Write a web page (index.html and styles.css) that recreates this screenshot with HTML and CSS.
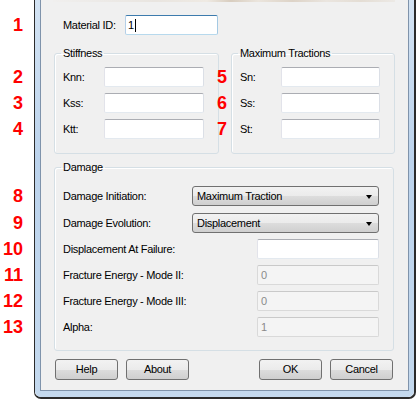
FILE: index.html
```html
<!DOCTYPE html>
<html>
<head>
<meta charset="utf-8">
<link rel="stylesheet" href="styles.css">
</head>
<body>
<div class="screen">
  <div class="window">
    <div class="frame">
      <div class="client">
        <div class="banner"></div>
        <div class="row id-row">
          <span class="num">1</span>
          <span class="lbl id-lbl">Material ID:</span>
          <div class="input focus id-input">1<span class="caret"></span></div>
        </div>
        <div class="groups">
          <fieldset class="group stiff">
            <legend>Stiffness</legend>
            <div class="row"><span class="num">2</span><span class="lbl small">Knn:</span><div class="input small-in"></div></div>
            <div class="row"><span class="num">3</span><span class="lbl small">Kss:</span><div class="input small-in"></div></div>
            <div class="row"><span class="num">4</span><span class="lbl small">Ktt:</span><div class="input small-in"></div></div>
          </fieldset>
          <fieldset class="group trac">
            <legend>Maximum Tractions</legend>
            <div class="row"><span class="num inner">5</span><span class="lbl small">Sn:</span><div class="input small-in"></div></div>
            <div class="row"><span class="num inner">6</span><span class="lbl small">Ss:</span><div class="input small-in"></div></div>
            <div class="row"><span class="num inner">7</span><span class="lbl small">St:</span><div class="input small-in"></div></div>
          </fieldset>
        </div>
        <fieldset class="group damage">
          <legend>Damage</legend>
          <div class="row drow first"><span class="num">8</span><span class="lbl">Damage Initiation:</span><div class="combo">Maximum Traction<span class="arrow"></span></div></div>
          <div class="row drow second"><span class="num">9</span><span class="lbl">Damage Evolution:</span><div class="combo">Displacement<span class="arrow"></span></div></div>
          <div class="row drow"><span class="num">10</span><span class="lbl">Displacement At Failure:</span><div class="input wide-in"></div></div>
          <div class="row drow"><span class="num">11</span><span class="lbl">Fracture Energy - Mode II:</span><div class="input wide-in disabled">0</div></div>
          <div class="row drow"><span class="num">12</span><span class="lbl">Fracture Energy - Mode III:</span><div class="input wide-in disabled">0</div></div>
          <div class="row drow"><span class="num">13</span><span class="lbl">Alpha:</span><div class="input wide-in disabled">1</div></div>
        </fieldset>
        <div class="buttons">
          <div class="btn-group">
            <button class="btn">Help</button>
            <button class="btn">About</button>
          </div>
          <div class="btn-group">
            <button class="btn">OK</button>
            <button class="btn">Cancel</button>
          </div>
        </div>
      </div>
    </div>
  </div>
</div>
</body>
</html>
```

FILE: styles.css
```css
html, body {
  margin: 0;
  padding: 0;
  background: #ffffff;
  width: 416px;
  height: 399px;
  overflow: hidden;
}

body {
  font-family: "Liberation Sans", Arial, sans-serif;
  font-size: 11px;
  letter-spacing: -0.3px;
  color: #000;
}

.screen {
  display: flex;
  padding-left: 34px;
}

.window {
  width: 382px;
  box-sizing: border-box;
  border-left: 1px solid #2b2b2b;
  border-right: 2px solid #2b2b2b;
  border-bottom: 2px solid #2b2b2b;
  border-radius: 0 0 7px 7px;
}

.frame {
  padding: 0 5px 6px 5px;
  background: linear-gradient(to bottom, #d3e3f3 0%, #bcd3ec 40%, #c4d9ee 100%);
  border-radius: 0 0 6px 6px;
}

.client {
  background: #f0f0f0;
  border: 1px solid #7f93ab;
  border-top: none;
  height: 390px;
  box-sizing: content-box;
  display: flex;
  flex-direction: column;
}

.banner {
  height: 2px;
  width: 342px;
  margin-left: 12px;
  background: linear-gradient(to right, #f0efee 0%, #e9e5e0 30%, #efeae3 45%, #d8cdbf 52%, #ebe5dd 60%, #ddd3c7 70%, #eae5df 80%, #e4ddd4 90%, #ece9e5 100%);
}

.row {
  position: relative;
  display: flex;
  align-items: center;
  height: 20px;
}

.num {
  position: absolute;
  right: calc(100% + 40px);
  top: 0;
  line-height: 20px;
  font-size: 18px;
  font-weight: bold;
  color: #ff0000;
  letter-spacing: 0;
  white-space: nowrap;
}

.num.inner {
  right: calc(100% + 13px);
}

.lbl {
  line-height: 20px;
  white-space: nowrap;
}

.id-row {
  margin-top: 13px;
  margin-left: 22px;
}

.id-lbl {
  width: 62px;
}

.input {
  box-sizing: border-box;
  height: 20px;
  background: #fff;
  border: 1px solid;
  border-color: #abadb3 #dbdfe6 #e3e9ef #e2e3ea;
  border-radius: 2px;
  line-height: 18px;
  padding-left: 2px;
}

.input.focus {
  border-color: #3d7bad #a4c9e3 #b7d9ed #b5cfe7;
}

.id-input {
  width: 93px;
  display: flex;
  align-items: center;
}

.caret {
  display: inline-block;
  width: 1px;
  height: 13px;
  background: #000;
  margin-left: 1px;
}

.groups {
  display: flex;
  gap: 12px;
  margin-top: 12px;
  margin-left: 13px;
}

.group {
  margin: 0;
  border: 1px solid #d5dfe5;
  border-radius: 3px;
  box-shadow: inset 1px 1px 0 #ffffff;
  min-inline-size: 0;
}

.group legend {
  padding: 0 2px;
  margin-left: -2px;
  line-height: 13px;
  color: #000;
}

.stiff, .trac {
  padding: 7px 14px 14px 8px;
  display: flex;
  flex-direction: column;
  gap: 6px;
  width: 165px;
  box-sizing: border-box;
}

.trac {
  width: 164px;
}

.lbl.small {
  width: 41px;
}

.small-in {
  width: 100px;
}

.damage {
  margin: 7px 0 0 13px;
  width: 340px;
  box-sizing: border-box;
  padding: 12px 14px 13px 8px;
  display: flex;
  flex-direction: column;
  gap: 6px;
}

.drow {
  justify-content: space-between;
}

.drow.second {
  margin-top: 1px;
}

.combo {
  position: relative;
  box-sizing: border-box;
  width: 187px;
  height: 20px;
  border: 1px solid #707070;
  border-radius: 3px;
  background: linear-gradient(to bottom, #f2f2f2 0%, #ebebeb 50%, #dddddd 50%, #cfcfcf 100%);
  line-height: 18px;
  padding-left: 4px;
}

.arrow {
  position: absolute;
  right: 6px;
  top: 8px;
  width: 0;
  height: 0;
  border-left: 3.5px solid transparent;
  border-right: 3.5px solid transparent;
  border-top: 4px solid #000;
}

.wide-in {
  width: 122px;
}

.input.disabled {
  background: #f4f4f4;
  border-color: #c9c9c9 #d9d9d9 #d9d9d9 #d9d9d9;
  color: #8a8a8a;
  padding-left: 3px;
}

.buttons {
  display: flex;
  justify-content: space-between;
  margin: 8px 15px 0 14px;
}

.btn-group {
  display: flex;
  gap: 8px;
}

.btn {
  box-sizing: border-box;
  width: 63px;
  height: 21px;
  margin: 0;
  padding: 0;
  border: 1px solid #707070;
  border-radius: 3px;
  background: linear-gradient(to bottom, #f2f2f2 0%, #ebebeb 50%, #dddddd 50%, #cfcfcf 100%);
  font-family: "Liberation Sans", Arial, sans-serif;
  font-size: 11px;
  letter-spacing: -0.3px;
  color: #000;
  line-height: 19px;
  text-align: center;
}
```
